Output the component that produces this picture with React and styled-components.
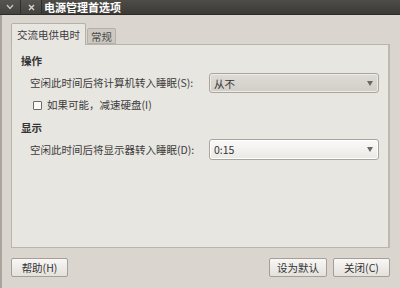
import styled, { createGlobalStyle } from "styled-components";

const Global = createGlobalStyle`
  html, body { margin: 0; padding: 0; }
  body {
    width: 400px;
    height: 288px;
    overflow: hidden;
    font-family: "Noto Sans CJK SC", "DejaVu Sans", sans-serif;
    font-size: 10.5px;
    color: #3c3c3c;
  }
`;

const Window = styled.div`
  width: 400px;
  height: 288px;
  display: flex;
  flex-direction: column;
  background: #dad6cf;
  box-sizing: border-box;
`;

const TitleBar = styled.div`
  height: 14px;
  display: flex;
  align-items: center;
  background: linear-gradient(#4d4c47, #3b3a36);
  border-bottom: 1px solid #2c2b28;
`;

const TitleButton = styled.div`
  width: 20px;
  height: 14px;
  display: flex;
  align-items: center;
  justify-content: center;
  background: linear-gradient(#55544f, #44433f);
  border-right: 1px solid #2e2d2a;
  color: #c9c7c2;
  svg { display: block; }
`;

const Title = styled.div`
  margin-left: 2px;
  color: #ffffff;
  font-weight: bold;
  font-size: 11px;
  line-height: 14px;
`;

const Body = styled.div`
  flex: 1;
  display: flex;
  flex-direction: column;
  padding: 8px 10px 0 11px;
  border-left: 2px solid #a9a59e;
  margin-left: 0;
  box-sizing: border-box;
`;

const Tabs = styled.div`
  display: flex;
  align-items: flex-end;
  height: 21px;
  margin-left: -2px;
  position: relative;
  z-index: 1;
`;

const Tab = styled.div`
  box-sizing: border-box;
  height: ${p => (p.$active ? "22px" : "16px")};
  padding: 0 ${p => (p.$active ? "5px" : "3px")};
  display: flex;
  align-items: center;
  border: 1px solid #b5b1a9;
  border-bottom: ${p => (p.$active ? "none" : "1px solid #b5b1a9")};
  background: ${p => (p.$active ? "#e8e6e1" : "#cdc9c1")};
  color: ${p => (p.$active ? "#3c3c3c" : "#4a4a4a")};
  margin-bottom: ${p => (p.$active ? "-1px" : "0")};
  margin-right: 1px;
  border-radius: 2px 2px 0 0;
`;

const Panel = styled.div`
  margin-left: -2px;
  width: 379px;
  height: 204px;
  box-sizing: border-box;
  background: #e8e6e1;
  border: 1px solid #b9b5ad;
  border-right: 2px solid #bdb9b1;
  padding: 9px 0 0 9px;
  display: flex;
  flex-direction: column;
`;

const Heading = styled.div`
  font-weight: bold;
  line-height: 14px;
  color: #333;
`;

const Row = styled.div`
  display: grid;
  grid-template-columns: 179px 170px;
  align-items: center;
  padding-left: 9px;
  margin-top: ${p => p.$mt || 0}px;
`;

const Label = styled.div`
  line-height: 14px;
`;

const Combo = styled.div`
  height: ${p => (p.$light ? "21px" : "20px")};
  box-sizing: border-box;
  display: flex;
  align-items: center;
  justify-content: space-between;
  padding: 0 5px 0 4px;
  border: 1px solid #aaa59c;
  border-radius: 3px;
  background: ${p =>
    p.$light
      ? "linear-gradient(#fbfaf9, #ebe9e5)"
      : "linear-gradient(#dedbd6, #d2cec7)"};
  box-shadow: inset 0 0 0 1px ${p => (p.$light ? "#ffffff" : "#eeece8")};
  color: #333;
`;

const Arrow = styled.span`
  width: 0;
  height: 0;
  border-left: 3px solid transparent;
  border-right: 3px solid transparent;
  border-top: 5px solid #6a6862;
`;

const Check = styled.label`
  display: flex;
  align-items: center;
  gap: 5px;
  padding-left: 12px;
  margin-top: 5px;
  line-height: 14px;
`;

const Box = styled.span`
  width: 7px;
  height: 7px;
  border: 1px solid #6f6c66;
  background: #fbfaf9;
  border-radius: 1px;
`;

const Footer = styled.div`
  display: flex;
  align-items: center;
  margin-top: 10px;
  margin-left: -2px;
  width: 379px;
`;

const Button = styled.div`
  width: ${p => p.$w || 57}px;
  height: 19px;
  box-sizing: border-box;
  display: flex;
  align-items: center;
  justify-content: center;
  border: 1px solid #a49f97;
  border-radius: 2px;
  background: linear-gradient(#f8f7f5, #e4e1dc);
  color: #333;
  margin-left: ${p => p.$ml || 0}px;
`;

export default function App() {
  return (
    <>
      <Global />
      <Window>
        <TitleBar>
          <TitleButton>
            <svg width="8" height="6" viewBox="0 0 8 6">
              <path d="M1 1 L4 4.5 L7 1" stroke="#c9c7c2" strokeWidth="1.3" fill="none" />
            </svg>
          </TitleButton>
          <TitleButton>
            <svg width="7" height="7" viewBox="0 0 7 7">
              <path d="M1 1 L6 6 M6 1 L1 6" stroke="#d8d6d1" strokeWidth="1.4" fill="none" />
            </svg>
          </TitleButton>
          <Title>电源管理首选项</Title>
        </TitleBar>
        <Body>
          <Tabs>
            <Tab $active>交流电供电时</Tab>
            <Tab>常规</Tab>
          </Tabs>
          <Panel>
            <Heading>操作</Heading>
            <Row $mt={5}>
              <Label>空闲此时间后将计算机转入睡眠(S):</Label>
              <Combo>
                <span>从不</span>
                <Arrow />
              </Combo>
            </Row>
            <Check>
              <Box />
              <span>如果可能，减速硬盘(I)</span>
            </Check>
            <Heading style={{ marginTop: 9 }}>显示</Heading>
            <Row $mt={4}>
              <Label>空闲此时间后将显示器转入睡眠(D):</Label>
              <Combo $light>
                <span>0:15</span>
                <Arrow />
              </Combo>
            </Row>
          </Panel>
          <Footer>
            <Button>帮助(H)</Button>
            <Button $w={58} $ml={201}>设为默认</Button>
            <Button $ml={6}>关闭(C)</Button>
          </Footer>
        </Body>
      </Window>
    </>
  );
}
